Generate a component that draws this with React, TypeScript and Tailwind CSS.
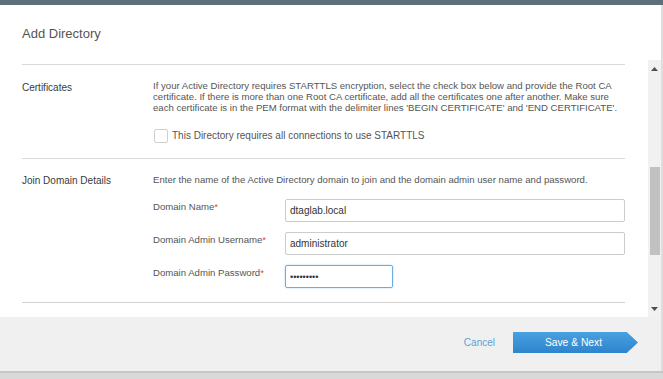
import React from "react";

function Field({ label, children }: { label: string; children: React.ReactNode }) {
  return (
    <div className="flex items-start">
      <div className="w-[132px] shrink-0 pt-[2px] text-[9.6px] leading-[12px] text-[#555]">
        {label}
        <span className="text-[#e04646]">*</span>
      </div>
      {children}
    </div>
  );
}

export default function App() {
  return (
    <div className="w-[663px] h-[379px] overflow-hidden bg-[#dadada] font-['Liberation_Sans',Arial,sans-serif] flex flex-col">
      <div className="h-[5px] shrink-0 bg-[#5c6f7a]" />
      <div className="flex h-[366px] shrink-0">
        <div className="w-[661px] flex flex-col bg-white">
          {/* header */}
          <div className="h-[55px] shrink-0 px-[22px] pt-[21px]">
            <h1 className="text-[13px] leading-[15px] text-[#555]">Add Directory</h1>
          </div>
          {/* scroll area */}
          <div className="flex h-[257px] shrink-0">
            <div className="w-[648px] pl-[22px] pr-[23px]">
              <div className="mt-[4px] h-px bg-[#dadada]" />
              {/* certificates */}
              <div className="flex pt-[15px] pb-[15px]">
                <div className="w-[131px] shrink-0 pt-[2px] text-[10px] leading-[12px] text-[#3a3a3a]">
                  Certificates
                </div>
                <div className="flex-1">
                  <p className="text-[9.6px] leading-[11px] text-[#555]">
                    If your Active Directory requires STARTTLS encryption, select the check box below and provide the Root CA certificate. If there is more than one Root CA certificate, add all the certificates one after another. Make sure each certificate is in the PEM format with the delimiter lines 'BEGIN CERTIFICATE' and 'END CERTIFICATE'.
                  </p>
                  <label className="mt-[16px] flex items-center gap-[4px]">
                    <span className="ml-[1px] block h-[14px] w-[14px] rounded-[2px] border border-[#cfcfcf] bg-white" />
                    <span className="text-[10px] leading-[12px] text-[#555]">
                      This Directory requires all connections to use STARTTLS
                    </span>
                  </label>
                </div>
              </div>
              <div className="h-px bg-[#dadada]" />
              {/* join domain */}
              <div className="flex pt-[15px]">
                <div className="w-[131px] shrink-0 pt-[1px] text-[10px] leading-[12px] text-[#3a3a3a]">
                  Join Domain Details
                </div>
                <div className="flex-1">
                  <p className="text-[9.6px] leading-[12px] text-[#555]">
                    Enter the name of the Active Directory domain to join and the domain admin user name and password.
                  </p>
                  <div className="mt-[13px] flex flex-col gap-[10px]">
                    <Field label="Domain Name">
                      <input
                        readOnly
                        value="dtaglab.local"
                        className="h-[23px] flex-1 min-w-0 rounded-[2px] border border-[#cccccc] px-[4px] text-[10px] text-[#333] outline-none"
                      />
                    </Field>
                    <Field label="Domain Admin Username">
                      <input
                        readOnly
                        value="administrator"
                        className="h-[23px] flex-1 min-w-0 rounded-[2px] border border-[#cccccc] px-[4px] text-[10px] text-[#333] outline-none"
                      />
                    </Field>
                    <Field label="Domain Admin Password">
                      <input
                        readOnly
                        type="password"
                        value="password1"
                        className="h-[23px] w-[108px] rounded-[2px] border border-[#6aaee6] px-[4px] text-[9px] text-[#333] outline-none shadow-[0_0_2px_rgba(102,175,233,0.6)]"
                      />
                    </Field>
                  </div>
                </div>
              </div>
              <div className="mt-[14px] h-px bg-[#d2d2d2]" />
            </div>
            {/* scrollbar */}
            <div className="w-[13px] shrink-0 flex flex-col items-center bg-[#f1f1f1]">
              <div className="h-[17px] w-full flex items-center justify-center">
                <svg width="7" height="4" viewBox="0 0 7 4">
                  <polygon points="3.5,0 7,4 0,4" fill="#505050" />
                </svg>
              </div>
              <div className="h-[90px]" />
              <div className="h-[88px] w-[10px] bg-[#c1c1c1]" />
              <div className="flex-1" />
              <div className="h-[17px] w-full flex items-center justify-center">
                <svg width="7" height="4" viewBox="0 0 7 4">
                  <polygon points="0,0 7,0 3.5,4" fill="#505050" />
                </svg>
              </div>
            </div>
          </div>
          {/* footer */}
          <div className="flex-1 bg-[#f0f0f0] flex justify-end items-start pt-[15px] pr-[23px]">
            <div className="flex items-center gap-[18px]">
              <button className="text-[10px] leading-[12px] text-[#5e9fd6]">Cancel</button>
              <button className="h-[21px] w-[125px] pr-[4px] bg-[linear-gradient(#48a1e1,#2e84cb)] [clip-path:polygon(0_0,91%_0,100%_50%,91%_100%,0_100%)] text-[10.3px] leading-[21px] text-white text-center">
                Save &amp; Next
              </button>
            </div>
          </div>
        </div>
        <div className="w-[2px] bg-[#dedede]" />
      </div>
      <div className="h-[2px] bg-[#c6c6c6]" />
      <div className="flex-1 bg-[#d9d9d9]" />
    </div>
  );
}
